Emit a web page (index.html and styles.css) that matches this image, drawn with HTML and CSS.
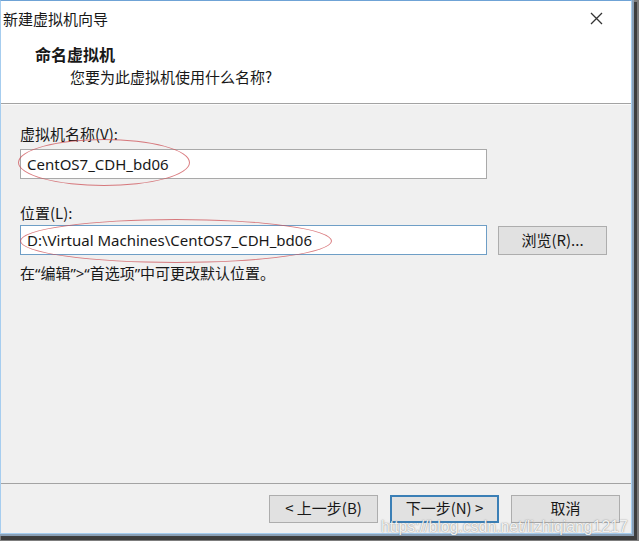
FILE: index.html
```html
<!DOCTYPE html>
<html lang="zh-CN">
<head>
<meta charset="utf-8">
<title>新建虚拟机向导</title>
<link rel="stylesheet" href="styles.css">
</head>
<body>
<div class="window">
  <div class="titlebar">
    <span class="title">新建虚拟机向导</span>
    <span class="close">
      <svg width="13" height="13" viewBox="0 0 13 13"><path d="M1 1 L12 12 M12 1 L1 12" stroke="#333" stroke-width="1.3" fill="none"/></svg>
    </span>
  </div>
  <div class="header">
    <div class="h-title">命名虚拟机</div>
    <div class="h-sub">您要为此虚拟机使用什么名称?</div>
  </div>
  <div class="body">
    <div class="label">虚拟机名称(V):</div>
    <div class="field">CentOS7_CDH_bd06</div>
    <div class="label label2">位置(L):</div>
    <div class="row">
      <div class="field focused">D:\Virtual Machines\CentOS7_CDH_bd06</div>
      <div class="btn browse">浏览(R)...</div>
    </div>
    <div class="hint">在“编辑”&gt;“首选项”中可更改默认位置。</div>
  </div>
  <div class="footer">
    <div class="btn">&lt; 上一步(B)</div>
    <div class="btn default">下一步(N) &gt;</div>
    <div class="btn">取消</div>
  </div>
  <div class="mark mark1"></div>
  <div class="mark mark2"></div>
  <div class="watermark">https://blog.csdn.net/lizhiqiang1217</div>
</div>
</body>
</html>
```
FILE: styles.css
```css
html, body {
  margin: 0;
  padding: 0;
  background: #7d7d7d;
}
body {
  width: 639px;
  height: 541px;
  overflow: hidden;
  font-family: "Noto Sans", "Noto Sans CJK SC", sans-serif;
  color: #181818;
}
.window {
  position: relative;
  box-sizing: border-box;
  width: 632px;
  height: 534px;
  border: 1px solid #a6cdef;
  border-top-color: #6fa3d6;
  background: #f0f0f0;
  display: flex;
  flex-direction: column;
  box-shadow: 1px 1px 0 1px #8aa0b6, 3px 4px 0 2px #3e3e3e;
}
.titlebar {
  height: 33px;
  background: #fff;
  display: flex;
  align-items: center;
  justify-content: space-between;
  padding-left: 2px;
  padding-right: 28px;
}
.title {
  font-size: 15px;
  font-family: "Noto Sans CJK SC", sans-serif;
  line-height: 20px;
  margin-top: 2px;
}
.close {
  display: flex;
  margin-top: 1px;
}
.header {
  height: 70px;
  background: #fff;
  border-bottom: 1px solid #a3a3a3;
  padding-left: 34px;
  box-sizing: border-box;
}
.h-title {
  font-family: "Noto Sans CJK SC", sans-serif;
  font-weight: 700;
  font-size: 16px;
  line-height: 20px;
  margin-top: 10px;
}
.h-sub {
  font-family: "Noto Sans CJK SC", sans-serif;
  font-size: 15px;
  line-height: 20px;
  margin-top: 3px;
  padding-left: 35px;
}
.body {
  flex: 1;
  padding: 19px 0 0 19px;
  border-top: 1px solid #fbfbfb;
}
.label {
  font-family: "Noto Sans CJK SC", sans-serif;
  font-size: 15px;
  line-height: 20px;
}
.field {
  box-sizing: border-box;
  width: 467px;
  height: 30px;
  margin-top: 5px;
  background: #fff;
  border: 1px solid #a9a9a9;
  font-size: 15px;
  line-height: 28px;
  padding-left: 6px;
  white-space: nowrap;
}
.label2 {
  margin-top: 24px;
}
.row {
  display: flex;
  align-items: center;
  gap: 11px;
  margin-top: 2px;
}
.row .field {
  margin-top: 0;
}
.field.focused {
  border-color: #6e9ec6;
}
.hint {
  font-family: "Noto Sans", "Noto Sans CJK SC", sans-serif;
  font-size: 15px;
  line-height: 20px;
  margin-top: 8px;
}
.btn {
  box-sizing: border-box;
  width: 109px;
  height: 28px;
  background: #e1e1e1;
  border: 1px solid #adadad;
  font-family: "Noto Sans CJK SC", sans-serif;
  font-size: 15px;
  line-height: 16px;
  display: flex;
  align-items: center;
  justify-content: center;
}
.footer .btn {
  padding-bottom: 2px;
}
.browse {
  height: 29px;
}
.footer {
  height: 50px;
  box-sizing: border-box;
  border-top: 1px solid #a3a3a3;
  display: flex;
  justify-content: flex-end;
  align-items: flex-start;
  gap: 12px;
  padding: 11px 11px 0 0;
}
.btn.default {
  border: 2px solid #3b7fb6;
}
.mark {
  position: absolute;
  box-sizing: border-box;
  border: 1.5px solid rgba(205, 80, 85, 0.75);
  border-radius: 50%;
}
.mark1 {
  left: 17px;
  top: 138px;
  width: 172px;
  height: 47px;
}
.mark2 {
  left: 19px;
  top: 218px;
  width: 312px;
  height: 44px;
}
.watermark {
  position: absolute;
  left: 380px;
  top: 518px;
  font-family: "Liberation Sans", Arial, sans-serif;
  font-size: 15.8px;
  line-height: 16px;
  color: rgba(255, 255, 255, 0.9);
  text-shadow: 0 0 1px rgba(80, 80, 80, 0.6), 0 0 2px rgba(120, 120, 120, 0.4);
  white-space: nowrap;
}
```
